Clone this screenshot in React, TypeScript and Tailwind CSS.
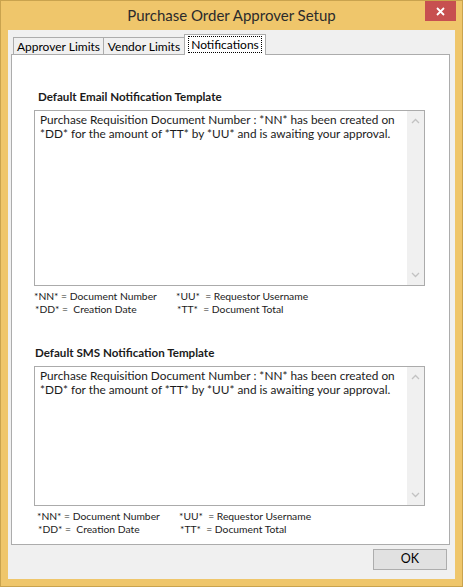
import { ReactNode } from 'react';

const FONT = "font-['Lato',_'Noto_Sans',_sans-serif]";

// the template text, broken where the edit box wraps it
const MESSAGE_LINES = [
  'Purchase Requisition Document Number : *NN* has been created on',
  '*DD* for the amount of *TT* by *UU* and is awaiting your approval.',
];

function Chevron({ up }: { up?: boolean }) {
  return (
    <svg width="9" height="6" viewBox="0 0 9 6" className="block">
      <path
        d={up ? 'M1 5 L4.5 1.5 L8 5' : 'M1 1 L4.5 4.5 L8 1'}
        fill="none"
        stroke="#c2c2c2"
        strokeWidth="1.3"
      />
    </svg>
  );
}

function TemplateBox({ lines, height }: { lines: string[]; height: string }) {
  return (
    <div className={`flex ${height} w-[391px] border border-[#ababab] bg-white`}>
      <div className="flex-1 overflow-hidden pl-[5px] pt-[2px] text-[11.8px] leading-[14px] text-[#1b1b1b]">
        {lines.map(l => (
          <div key={l} className="whitespace-nowrap">{l}</div>
        ))}
      </div>
      <div className="flex w-[17px] flex-col items-center justify-between bg-[#f0f0f0] py-[7px]">
        <Chevron up />
        <Chevron />
      </div>
    </div>
  );
}

function Legend({ indent }: { indent: string }) {
  return (
    <div className={`mt-[4px] ${indent} text-[10.3px] leading-[13px] text-[#1b1b1b]`}>
      <div className="flex">
        <span className="w-[142px] whitespace-pre">*NN* = Document Number</span>
        <span className="whitespace-pre">*UU*  = Requestor Username</span>
      </div>
      <div className="flex pl-px">
        <span className="w-[142px] whitespace-pre">*DD* =  Creation Date</span>
        <span className="whitespace-pre">*TT*  = Document Total</span>
      </div>
    </div>
  );
}

function Section({ title, titleIndent, legendIndent, children }: { title: string; titleIndent: string; legendIndent: string; children: ReactNode }) {
  return (
    <div>
      <div className={`${titleIndent} text-[11.6px] font-bold leading-[16px] text-[#1b1b1b]`}>{title}</div>
      <div className="mt-[5px]">{children}</div>
      <Legend indent={legendIndent} />
    </div>
  );
}

export default function App() {
  return (
    <div className={`${FONT} relative h-[587px] w-[463px] border border-[#c9a34e] bg-[#efc66b]`}>
      <div className="flex h-[29px] items-center justify-center pb-[1px] text-[15px] text-[#2b2b2b]">
        Purchase Order Approver Setup
      </div>
      <div className="absolute right-[6px] top-0 flex h-[20px] w-[31px] items-center justify-center bg-[#c75050]">
        <svg width="9" height="9" viewBox="0 0 9 9">
          <path d="M1 1 L8 8 M8 1 L1 8" stroke="white" strokeWidth="1.8" />
        </svg>
      </div>

      <div className="mx-[7px] flex h-[549px] flex-col bg-[#f0f0f0] pl-[3px] pr-[5px]">
        <div className="flex h-[24px] items-end pl-[2px] text-[12px] leading-[15px] text-black">
          <div className="flex h-[17px] w-[91px] items-center justify-center border border-b-0 border-[#acacac] bg-[#f0f0f0]">
            Approver Limits
          </div>
          <div className="flex h-[17px] w-[81px] items-center justify-center border border-b-0 border-l-0 border-[#acacac] bg-[#f0f0f0]">
            Vendor Limits
          </div>
          <div className="relative z-10 -mb-px -ml-px flex h-[21px] w-[82px] items-start justify-center border border-b-0 border-[#acacac] bg-white pt-[1px]">
            <span className="border border-dotted border-black px-[2px]">Notifications</span>
          </div>
        </div>
        <div className="flex h-[491px] flex-col border border-[#acacac] bg-white pl-[22px] pt-[34px]">
          <Section title="Default Email Notification Template" titleIndent="pl-[4px]" legendIndent="pl-0">
            <TemplateBox lines={MESSAGE_LINES} height="h-[176px]" />
          </Section>
          <div className="mt-[29px]">
            <Section title="Default SMS Notification Template" titleIndent="pl-[1px]" legendIndent="pl-[3px]">
              <TemplateBox lines={MESSAGE_LINES} height="h-[140px]" />
            </Section>
          </div>
        </div>
        <div className="flex flex-1 items-start justify-end pr-[3px] pt-[4px]">
          <button className="h-[21px] w-[74px] border border-[#adadad] bg-[#e1e1e1] text-[12.5px] text-black">OK</button>
        </div>
      </div>
    </div>
  );
}
